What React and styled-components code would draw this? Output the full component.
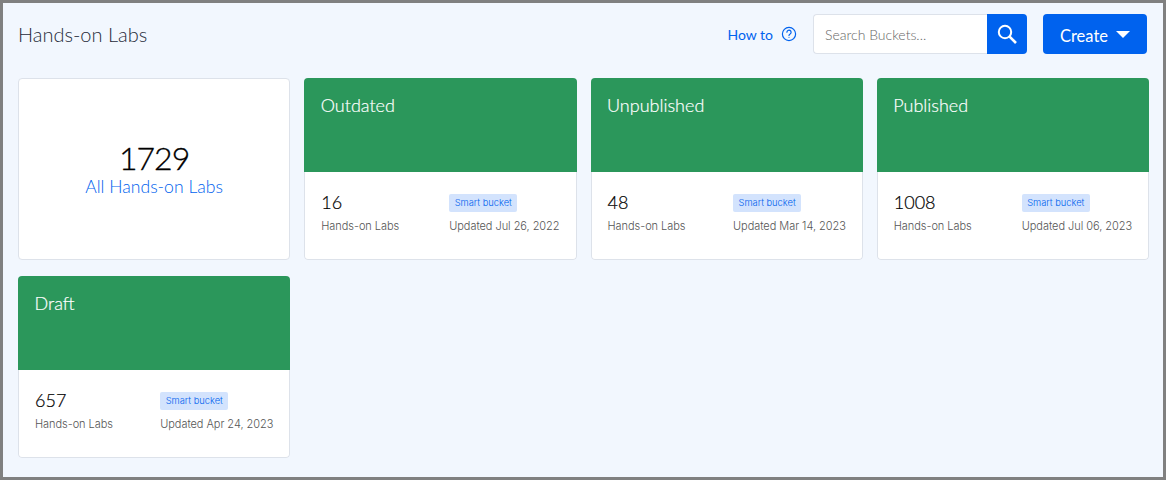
import { createGlobalStyle, styled } from "styled-components";

const GlobalStyle = createGlobalStyle`
  html, body {
    margin: 0;
    padding: 0;
    background: #f2f7fe;
    font-family: "Lato", "Liberation Sans", sans-serif;
  }
  * { box-sizing: border-box; }
`;

const Frame = styled.div`
  width: 1166px;
  height: 480px;
  border: 3px solid #808080;
  background: #f2f7fe;
  padding: 11px 14px 0 15px;
  overflow: hidden;
`;

const Header = styled.header`
  display: flex;
  align-items: center;
  height: 40px;
  padding-right: 2px;
  margin-bottom: 24px;
`;

const Title = styled.h1`
  flex: 1;
  margin: 0;
  font-size: 20px;
  font-weight: 300;
  color: #1f2a38;
`;

const HowTo = styled.a`
  display: flex;
  align-items: center;
  gap: 8px;
  margin-right: 16px;
  font-size: 14px;
  color: #0062ee;
`;

const SearchBox = styled.div`
  display: flex;
  width: 214px;
  height: 40px;
  margin-right: 16px;
`;

const SearchInput = styled.input`
  flex: 1;
  min-width: 0;
  padding: 0 11px;
  border: 1px solid #dde2ea;
  border-right: 0;
  border-radius: 4px 0 0 4px;
  background: #fff;
  font-family: inherit;
  font-size: 14px;
  font-weight: 300;
  outline: none;
  &::placeholder { color: #666; opacity: 1; }
`;

const SearchButton = styled.button`
  display: flex;
  align-items: center;
  justify-content: center;
  width: 40px;
  padding: 0;
  border: 0;
  border-radius: 0 4px 4px 0;
  background: #0062ee;
  color: #fff;
`;

const CreateButton = styled.button`
  display: flex;
  align-items: center;
  justify-content: center;
  gap: 8px;
  width: 104px;
  height: 40px;
  padding: 0;
  border: 0;
  border-radius: 4px;
  background: #0062ee;
  color: #fff;
  font-family: inherit;
  font-size: 16.5px;
`;

const CreateLabel = styled.span`
  padding-top: 3px;
`;

const Caret = styled.span`
  width: 0;
  height: 0;
  border-left: 7px solid transparent;
  border-right: 7px solid transparent;
  border-top: 7px solid #fff;
`;

const Grid = styled.div`
  display: grid;
  grid-template-columns: repeat(4, 1fr);
  grid-auto-rows: 182px;
  column-gap: 14px;
  row-gap: 16px;
`;

const TotalCard = styled.div`
  display: flex;
  flex-direction: column;
  align-items: center;
  justify-content: center;
  border: 1px solid #dde2ea;
  border-radius: 4px;
  background: #fff;
`;

const TotalCount = styled.div`
  padding-bottom: 3px;
  font-size: 32px;
  font-weight: 300;
  letter-spacing: -1px;
  line-height: 32px;
  color: #000;
  -webkit-text-stroke: 0.3px #000;
`;

const TotalLabel = styled.a`
  font-size: 17.6px;
  font-weight: 300;
  line-height: 20px;
  color: #0062ee;
`;

const BucketCard = styled.div`
  display: flex;
  flex-direction: column;
  border-radius: 4px;
  overflow: hidden;
`;

const BucketHead = styled.div`
  height: 94px;
  padding: 16px 16.5px;
  background: #2b975b;
  color: #fff;
  font-size: 18px;
  font-weight: 300;
  line-height: 22px;
  -webkit-text-stroke: 0.2px #fff;
`;

const BucketBody = styled.div`
  flex: 1;
  display: flex;
  justify-content: space-between;
  padding: 21px 16px 0;
  border: 1px solid #dde2ea;
  border-top: 0;
  border-radius: 0 0 4px 4px;
  background: #fff;
`;

const Col = styled.div`
  display: flex;
  flex-direction: column;
  align-items: flex-start;
`;

const Count = styled.div`
  height: 18px;
  margin-bottom: 8px;
  font-size: 18px;
  font-weight: 300;
  line-height: 18px;
  color: #000;
  -webkit-text-stroke: 0.2px #000;
`;

const Small = styled.div`
  font-family: "Inter", "Lato", sans-serif;
  font-size: 11px;
  font-weight: 300;
  letter-spacing: -0.05px;
  line-height: 14px;
  color: #555;
`;

const Badge = styled.span`
  height: 18px;
  margin-top: 1px;
  margin-bottom: 7px;
  padding: 0 5.5px;
  border-radius: 2px;
  background: #d3e3fd;
  color: #0062ee;
  font-family: "Inter", "Lato", sans-serif;
  font-size: 9.3px;
  font-weight: 300;
  line-height: 18px;
`;

const buckets = [
  { name: "Outdated", count: 16, updated: "Jul 26, 2022" },
  { name: "Unpublished", count: 48, updated: "Mar 14, 2023" },
  { name: "Published", count: 1008, updated: "Jul 06, 2023" },
  { name: "Draft", count: 657, updated: "Apr 24, 2023" },
];

function HelpIcon() {
  return (
    <svg width="16" height="16" viewBox="0 0 16 16" fill="none" stroke="currentColor" strokeWidth="1.2">
      <circle cx="8" cy="8" r="6.6" />
      <path d="M5.9 6.2a2.1 2.1 0 1 1 3.2 1.8c-.7.4-1.1.8-1.1 1.6" strokeLinecap="round" />
      <circle cx="8" cy="11.6" r=".5" fill="currentColor" stroke="none" />
    </svg>
  );
}

function SearchIcon() {
  return (
    <svg width="20" height="20" viewBox="0 0 20 20" fill="none" stroke="currentColor">
      <circle cx="8" cy="8" r="6.2" strokeWidth="2" />
      <path d="M12.6 12.6 L19 19" strokeWidth="2.6" />
    </svg>
  );
}

export default function App() {
  return (
    <>
      <GlobalStyle />
      <Frame>
        <Header>
          <Title>Hands-on Labs</Title>
          <HowTo>
            How to <HelpIcon />
          </HowTo>
          <SearchBox>
            <SearchInput placeholder="Search Buckets..." />
            <SearchButton>
              <SearchIcon />
            </SearchButton>
          </SearchBox>
          <CreateButton>
            <CreateLabel>Create</CreateLabel> <Caret />
          </CreateButton>
        </Header>
        <Grid>
          <TotalCard>
            <TotalCount>1729</TotalCount>
            <TotalLabel>All Hands-on Labs</TotalLabel>
          </TotalCard>
          {buckets.map((b) => (
            <BucketCard key={b.name}>
              <BucketHead>{b.name}</BucketHead>
              <BucketBody>
                <Col>
                  <Count>{b.count}</Count>
                  <Small>Hands-on Labs</Small>
                </Col>
                <Col>
                  <Badge>Smart bucket</Badge>
                  <Small>Updated {b.updated}</Small>
                </Col>
              </BucketBody>
            </BucketCard>
          ))}
        </Grid>
      </Frame>
    </>
  );
}
